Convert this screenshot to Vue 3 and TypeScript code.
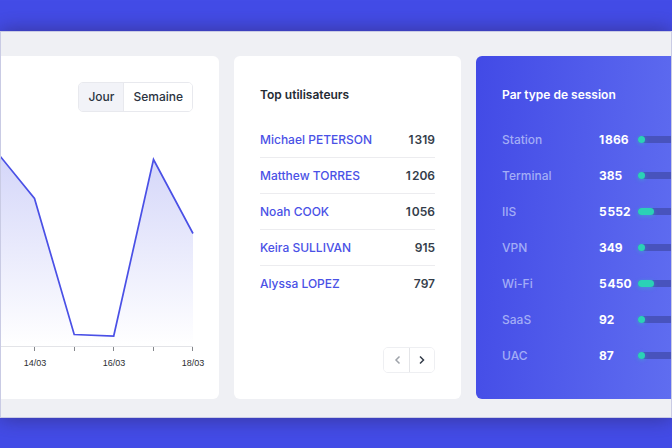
<script setup lang="ts">
import { ref } from 'vue'

interface Entry { label: string; value: number }

const period = ref<'jour' | 'semaine'>('jour')

const users: Entry[] = [
  { label: 'Michael PETERSON', value: 1319 },
  { label: 'Matthew TORRES', value: 1206 },
  { label: 'Noah COOK', value: 1056 },
  { label: 'Keira SULLIVAN', value: 915 },
  { label: 'Alyssa LOPEZ', value: 797 },
]

const sessions: (Entry & { fill: number })[] = [
  { label: 'Station', value: 1866, fill: 7 },
  { label: 'Terminal', value: 385, fill: 7 },
  { label: 'IIS', value: 5552, fill: 16 },
  { label: 'VPN', value: 349, fill: 7 },
  { label: 'Wi-Fi', value: 5450, fill: 16 },
  { label: 'SaaS', value: 92, fill: 7 },
  { label: 'UAC', value: 87, fill: 7 },
]

const ticks = [
  { x: 33, label: '14/03' },
  { x: 73, label: '' },
  { x: 112, label: '16/03' },
  { x: 152, label: '' },
  { x: 191, label: '18/03' },
]

const line = '-1,16 33.5,58.5 73.2,194.5 112.7,196 152.5,19.5 192,93.5'

// Thousands are set apart by a hair space
const format = (n: number): string => String(n).replace(/\B(?=(\d{3})+$)/g, '\u200a')
</script>

<template>
  <div class="page">
    <main class="panel">
      <section class="card chart-card">
        <div class="segment" role="group" aria-label="Période">
          <button type="button" :class="{ active: period === 'jour' }" @click="period = 'jour'">Jour</button>
          <button type="button" :class="{ active: period === 'semaine' }" @click="period = 'semaine'">Semaine</button>
        </div>
        <svg class="chart" viewBox="0 0 218 232" role="img" aria-label="Sessions">
          <defs>
            <linearGradient id="area" gradientUnits="userSpaceOnUse" x1="0" y1="15" x2="0" y2="206">
              <stop offset="0" stop-color="#d4d6f9" />
              <stop offset="1" stop-color="#ffffff" />
            </linearGradient>
          </defs>
          <polygon :points="`-1,206 ${line} 192,206`" fill="url(#area)" />
          <path d="M0 206.5H192" stroke="#e3e4e8" />
          <polyline :points="line" fill="none" stroke="#4a50e6" stroke-width="1.7" />
          <g v-for="t in ticks" :key="t.x">
            <path :d="`M${t.x + 0.5} 207V211`" stroke="#85878c" />
            <text v-if="t.label" :x="t.x + 1" y="226" text-anchor="middle">{{ t.label }}</text>
          </g>
        </svg>
      </section>

      <section class="card users-card">
        <h2>Top utilisateurs</h2>
        <table class="users">
          <tbody>
            <tr v-for="u in users" :key="u.label">
              <th scope="row"><a href="#">{{ u.label }}</a></th>
              <td>{{ format(u.value) }}</td>
            </tr>
          </tbody>
        </table>
        <div class="pager">
          <button type="button" disabled aria-label="Précédent">
            <svg viewBox="0 0 8 10"><path d="M6.5 1.5 3 5 6.5 8.5" /></svg>
          </button>
          <button type="button" aria-label="Suivant">
            <svg viewBox="0 0 8 10"><path d="M2 1.5 5.5 5 2 8.5" /></svg>
          </button>
        </div>
      </section>

      <section class="card sessions-card">
        <h2>Par type de session</h2>
        <ul class="sessions">
          <li v-for="s in sessions" :key="s.label">
            <span class="name">{{ s.label }}</span>
            <strong>{{ format(s.value) }}</strong>
            <span class="track"><span class="fill" :style="{ width: s.fill + 'px' }"></span></span>
          </li>
        </ul>
      </section>
    </main>
  </div>
</template>

<style>
body {
  margin: 0;
  background: #434ce7;
}
</style>

<style scoped>
* {
  box-sizing: border-box;
}

.page {
  padding: 31px 0 30px;
  background: #434ce7;
  font: 500 12px/16px Inter, sans-serif;
  color: #2b333f;
  overflow: hidden;
}

.panel {
  display: grid;
  grid-template-columns: 218fr 227fr 195fr;
  gap: 15px;
  padding: 24px 0 18px;
  border: 1px solid #c9cbe4;
  background: #eff0f4;
  box-shadow: 0 0 20px rgba(45, 35, 90, 0.6);
}

.card {
  display: flex;
  flex-direction: column;
  min-width: 0;
  padding: 26px;
  border-radius: 6px;
  background: #fff;
}

h2 {
  margin: 0 0 13px;
  font-size: 12px;
  font-weight: 600;
  line-height: 26px;
  color: #252b34;
  white-space: nowrap;
}

button {
  padding: 0;
  border: 0;
  background: #fff;
  font: inherit;
  color: inherit;
  cursor: pointer;
}

.chart-card {
  padding: 26px 0 0;
  border-radius: 0 6px 6px 0;
}

.segment {
  display: flex;
  align-self: flex-end;
  margin-right: 26px;
  border: 1px solid #e8e9ee;
  border-radius: 5px;
  overflow: hidden;
}

.segment button {
  height: 28px;
  padding: 0 9px;
}

.segment button + button {
  border-left: 1px solid #e8e9ee;
}

.segment .active {
  background: #f2f3f8;
}

.chart {
  display: block;
  width: 100%;
  margin-top: 28px;
}

.chart text {
  font: 9px "Liberation Sans", sans-serif;
  fill: #2c2e32;
}

.users {
  width: 100%;
  border-collapse: collapse;
}

.users th,
.users td {
  height: 36px;
  padding: 2px 0 0;
  white-space: nowrap;
}

.users tr + tr > * {
  border-top: 1px solid #ececef;
}

.users th {
  text-align: left;
  font-weight: 500;
}

.users a {
  color: #4a51e6;
  text-decoration: none;
}

.users td {
  text-align: right;
  font-weight: 600;
  color: #343d4a;
}

.pager {
  display: flex;
  align-self: flex-end;
  margin-top: auto;
  border: 1px solid #eeeff2;
  border-radius: 5px;
  overflow: hidden;
}

.pager button {
  display: grid;
  place-items: center;
  width: 25px;
  height: 24px;
}

.pager button + button {
  border-left: 1px solid #e4e5e8;
}

.pager svg {
  width: 8px;
  height: 10px;
  fill: none;
  stroke: #343d4a;
  stroke-width: 1.5;
}

.pager button:disabled svg {
  stroke: #9fa3aa;
}

.sessions-card {
  padding-right: 0;
  border-radius: 6px 0 0 6px;
  background: linear-gradient(95deg, #424ae6, #5f6df0);
}

.sessions-card h2 {
  color: #fff;
}

.sessions {
  margin: 0;
  padding: 0;
  list-style: none;
}

.sessions li {
  display: grid;
  grid-template-columns: 97px 39px 1fr;
  align-items: center;
  height: 36px;
}

.name,
.sessions strong {
  padding-top: 1px;
}

.name {
  color: #a3adf6;
}

.sessions strong {
  font-weight: 700;
  color: #fff;
}

.track {
  height: 7px;
  border-radius: 4px 0 0 4px;
  background: #4853bd;
}

.fill {
  display: block;
  height: 7px;
  border-radius: 4px;
  background: #2bd1b6;
  box-shadow: 0 1px 4px rgba(43, 209, 182, 0.4);
}
</style>
